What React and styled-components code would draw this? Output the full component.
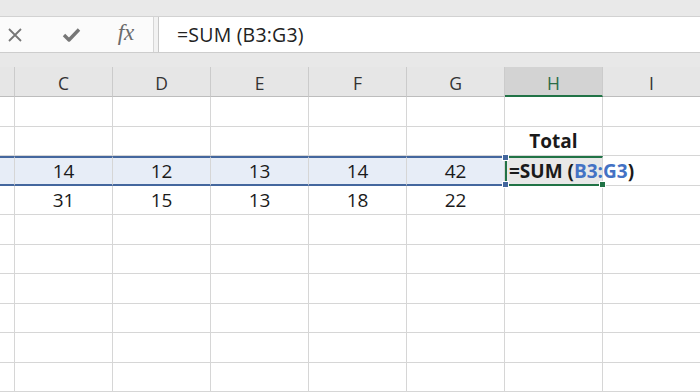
import React from 'react';
import styled, { createGlobalStyle, css } from 'styled-components';

const GlobalStyle = createGlobalStyle`
  html, body {
    margin: 0;
    padding: 0;
    background: #fff;
    overflow: hidden;
  }
  body {
    font-family: "Open Sans", "Liberation Sans", sans-serif;
  }
`;

const Page = styled.div`
  width: 700px;
  height: 392px;
  overflow: hidden;
  display: flex;
  flex-direction: column;
  background: #e8e8e8;
`;

const TopStrip = styled.div`
  flex: none;
  height: 16px;
  background: #e9e9e9;
  border-bottom: 1px solid #d2d2d2;
`;

const FormulaBar = styled.div`
  flex: none;
  height: 35px;
  display: flex;
  background: #fbfbfb;
  border-bottom: 1px solid #cdcdcd;
`;

const IconGroup = styled.div`
  width: 153px;
  display: grid;
  grid-template-columns: 30px 82px 28px;
  align-items: center;
  justify-items: center;
  border-right: 1px solid #d6d6d6;
`;

const Fx = styled.span`
  font-family: "Liberation Serif", "DejaVu Serif", serif;
  font-style: italic;
  font-size: 23px;
  color: #6b6b6b;
  margin-top: -3px;
`;

const Gap = styled.div`
  width: 4px;
  background: #f2f2f2;
`;

const FormulaInput = styled.div`
  flex: 1;
  display: flex;
  align-items: center;
  padding-left: 18px;
  background: #fff;
  border-left: 1px solid #c8c8c8;
  font-size: 19.5px;
  letter-spacing: 0.2px;
  color: #222;
`;

const Spacer = styled.div`
  flex: none;
  height: 14px;
`;

const Sheet = styled.div`
  display: grid;
  grid-template-columns: 15px repeat(7, 98px);
  grid-template-rows: 30px repeat(10, 29.5px);
`;

const ColumnHeader = styled.div`
  box-sizing: border-box;
  display: flex;
  align-items: center;
  justify-content: center;
  padding-top: 3px;
  font-size: 17.5px;
  color: #333;
  background: #e6e6e6;
  border-right: 1px solid #cbcbcb;
  border-bottom: 1px solid #bdbdbd;
  ${(p) =>
    p.$active &&
    css`
      background: #d3d3d3;
      color: #2a6b47;
      border-bottom: 2px solid #217346;
    `}
`;

const Cell = styled.div`
  box-sizing: border-box;
  display: flex;
  align-items: center;
  justify-content: center;
  white-space: nowrap;
  font-size: 19px;
  color: #1a1a1a;
  font-weight: ${(p) => (p.$bold ? 700 : 400)};
  background: #fff;
  border-right: 1px solid #d6d6d6;
  border-bottom: 1px solid #d6d6d6;
  ${(p) =>
    p.$selected &&
    css`
      background: #e7edf7;
      border-top: 2px solid #44679e;
      border-bottom: 2px solid #44679e;
    `}
`;

const ActiveCell = styled(Cell)`
  position: relative;
  z-index: 1;
  justify-content: flex-start;
  padding-left: 2px;
  background: transparent;
  border-left: 2px solid #217346;
  border-top: 2px solid #217346;
  border-bottom: 2px solid #217346;
`;

const Ref = styled.span`
  color: #4472c4;
`;

const Handle = styled.span`
  position: absolute;
  width: 5px;
  height: 5px;
  background: ${(p) => p.$color};
  border: 1px solid #fff;
  ${(p) => (p.$top ? 'top: -4px;' : 'bottom: -4px;')}
  ${(p) => (p.$right ? 'right: -4px;' : 'left: -5px;')}
`;

const CloseIcon = () => (
  <svg width="16" height="16" viewBox="0 0 16 16">
    <path d="M2 2 L14 14 M14 2 L2 14" stroke="#777" strokeWidth="1.8" fill="none" />
  </svg>
);

const CheckIcon = () => (
  <svg width="19" height="16" viewBox="0 0 19 16">
    <path d="M2 8 L7 13 L17 2.5" stroke="#777" strokeWidth="3.4" fill="none" strokeLinejoin="round" />
  </svg>
);

const columns = ['', 'C', 'D', 'E', 'F', 'G', 'H', 'I'];

const rows = [
  [],
  [null, null, null, null, null, null, 'Total'],
  [null, 14, 12, 13, 14, 42, 'formula'],
  [null, 31, 15, 13, 18, 22],
  [],
  [],
  [],
  [],
  [],
  [],
];

const App = () => {
  return (
    <Page>
      <GlobalStyle />
      <TopStrip />
      <FormulaBar>
        <IconGroup>
          <CloseIcon />
          <CheckIcon />
          <Fx>fx</Fx>
        </IconGroup>
        <Gap />
        <FormulaInput>=SUM (B3:G3)</FormulaInput>
      </FormulaBar>
      <Spacer />
      <Sheet>
        {columns.map((c) => (
          <ColumnHeader key={c || 'B'} $active={c === 'H'}>
            {c}
          </ColumnHeader>
        ))}
        {rows.map((row, r) =>
          columns.map((c, i) => {
            const value = row[i];
            if (value === 'formula') {
              return (
                <ActiveCell key={`${r}-${i}`} $bold>
                  =SUM (<Ref>B3:G3</Ref>)
                  <Handle $top $color="#44679e" />
                  <Handle $color="#44679e" />
                  <Handle $right $color="#217346" />
                </ActiveCell>
              );
            }
            return (
              <Cell key={`${r}-${i}`} $selected={r === 2 && i < 6} $bold={value === 'Total'}>
                {value}
              </Cell>
            );
          })
        )}
      </Sheet>
    </Page>
  );
};

export default App;
